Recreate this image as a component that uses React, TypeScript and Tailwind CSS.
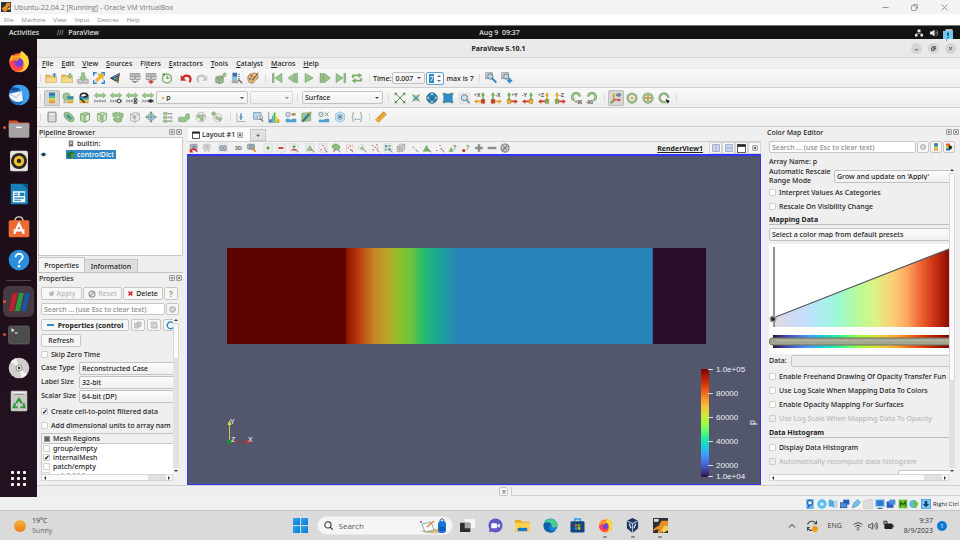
import { cloneElement, type ReactElement, type ReactNode } from 'react';
import { clsx } from 'clsx';

const UBUNTU = "font-['Noto_Sans',sans-serif]";
const SEGOE = "font-['Open_Sans',sans-serif]";

const TURBO = [
  '#30123b', '#4145ab', '#4675ed', '#39a2fc', '#1bcfd4', '#24eca6', '#61fc6c', '#a4fc3b',
  '#d1e834', '#f3c63a', '#fe9b2d', '#f36315', '#d93806', '#b11901', '#7a0402',
];

const PASTEL: [number, string][] = [
  [0, '#dfdae2'], [18, '#c4dcfd'], [28, '#abeff0'], [37, '#9cf7d4'], [48, '#b6fb98'],
  [58, '#daf384'], [68, '#fbcf74'], [76, '#fda860'], [85, '#ea5c2c'], [93, '#c22c10'], [100, '#8a0d03'],
];

const FIELD: [number, string][] = [
  [0, '#8a1400'], [10, '#b63608'], [25, '#c68428'], [36, '#bca428'], [48, '#8cc22a'],
  [58, '#6cc43c'], [68, '#2cbc6c'], [79, '#18aa8c'], [90, '#2098a4'], [100, '#2884b8'],
];

function Svg({ children, className = 'w-3 h-3' }: { children: ReactNode; className?: string }) {
  return (
    <svg viewBox="0 0 16 16" className={clsx('shrink-0', className)} fill="none" aria-hidden="true">
      {children}
    </svg>
  );
}

/* ---------- toolbar icons ---------- */

const G = '#9bc78a';
const GD = '#64985a';
const GR = '#8b8f8c';

const folder = (badge: ReactNode) => (
  <>
    <path d="M1 4h5l1.500 1.500H15V14H1z" fill="#e9c263" stroke="#b98f35" strokeWidth=".8" />
    <path d="M1.500 7.500h13V14h-13z" fill="#f5d98c" />
    {badge}
  </>
);

const server = (badge: ReactNode) => (
  <>
    <path d="M1.500 2h6v8h-6zM8.500 2h6v8h-6z" fill="#d3d5d3" stroke="#8d908d" />
    <path d="M3 4h3M3 6h3M10 4h3M10 6h3" stroke="#747874" />
    <path d="M4.500 10v3h7v-3" stroke="#8d908d" />
    {badge}
  </>
);

const ruler = (badge: ReactNode) => (
  <>
    <path d="M0 4.500L4 1v2h8V1l4 3.500L12 8V6H4v2z" fill={G} stroke={GD} strokeWidth=".5" />
    <path d="M1 14v-4M4.500 14v-3M8 14v-4M11.500 14v-3M15 14v-4M1 12h14" stroke="#7a7a7a" />
    {badge}
  </>
);

const cube = (fill: string, inner?: ReactNode) => (
  <>
    <path d="M2 4l7-2.500 5 2v8L8 15l-6-2.500z" fill={fill} stroke={GD} strokeWidth=".9" />
    <path d="M2 4l6 2 6-2.500M8 6v9" stroke={GD} strokeWidth=".9" />
    {inner}
  </>
);

const dotted = <rect x="1.500" y="1.500" width="13" height="13" stroke="#b0b0b0" strokeDasharray="2 2" />;
const cursor = <path d="M10.500 10l4.500 5" stroke="#6a6a6a" strokeWidth="1.400" />;

const turboSwatch = (x: number, y: number, w: number, h: number) => (
  <>
    <rect x={x} y={y} width={w} height={h} fill="#e59a3c" />
    <rect x={x} y={y} width={w} height={h * 0.75} fill="#d6d04c" />
    <rect x={x} y={y} width={w} height={h * 0.5} fill="#45bda0" />
    <rect x={x} y={y} width={w} height={h * 0.28} fill="#3773c0" />
  </>
);

const fourArrows = (dir: 'out' | 'in') => (
  <>
    <path d="M3 3l10 10M13 3L3 13" stroke="#5b8f4e" strokeWidth="1.300" />
    {dir === 'out' ? (
      <path d="M1 1h4L1 5zM15 1v4l-4-4zM1 15v-4l4 4zM15 15h-4l4-4z" fill="#5b8f4e" />
    ) : (
      <>
        <path d="M7 7V3.500L3.500 7zM9 7h3.500L9 3.500zM7 9H3.500L7 12.500zM9 9v3.500L12.500 9z" fill="#5b8f4e" />
        <circle cx="8" cy="8" r="2" fill="#3292cf" />
      </>
    )}
  </>
);

function axis(label: string, right: boolean, v: string, dot: string, h: string) {
  const x = right ? 12 : 4;
  return (
    <>
      <path d={`M${x} 12V3`} stroke={v} strokeWidth="2" />
      <path d={`M${x - 2.6} 4.500L${x} 0l2.600 4.500z`} fill={v} />
      <path d={right ? 'M12 12.500H4' : 'M4 12.500h8'} stroke={h} strokeWidth="2.200" />
      <path d={right ? 'M4.500 9.500L0 12.500l4.500 3z' : 'M11.500 9.500l4.500 3-4.500 3z'} fill={h} />
      <rect x={x - 2.5} y="10" width="5" height="5" fill={dot} stroke="#7d5a1a" strokeWidth=".5" />
      <text x={right ? 0 : 7} y="7" fontSize="7" fontWeight="700" fill="#5e5e5e">{label}</text>
    </>
  );
}

const rotate = (flip: boolean) => (
  <>
    <path d={flip ? 'M3 6a5 5 0 1 1 7 5' : 'M13 6a5 5 0 1 0-7 5'} stroke={GD} strokeWidth="3.200" />
    <path d={flip ? 'M3 6a5 5 0 1 1 7 5' : 'M13 6a5 5 0 1 0-7 5'} stroke="#a7cb98" strokeWidth="1.800" />
    <text x={flip ? 0 : 6} y="15.500" fontSize="6.500" fontWeight="700" fill="#555">{flip ? '-90' : '+90'}</text>
  </>
);

const ring = (inner: ReactNode) => (
  <>
    <circle cx="8" cy="8" r="5.800" stroke="#7fa070" strokeWidth="3.400" />
    <circle cx="8" cy="8" r="5.800" stroke="#a9c79b" strokeWidth="1.700" />
    {inner}
  </>
);

const magnifier = (
  <>
    <rect x="1" y="1" width="9" height="8" fill="#c9ccd0" stroke="#8c9095" />
    <circle cx="7" cy="6" r="3.500" fill="#b5d7ef" stroke="#6b7780" strokeWidth="1.200" />
  </>
);

const tool = {
  open: folder(<path d="M12.500 1l2.500 3h-1.500v3h-2V4H10z" fill="#2f88c5" />),
  loadState: folder(<path d="M12 9l3-4h-1.700V2h-2.600v3H9z" fill={G} stroke={GD} strokeWidth=".6" />),
  save: (
    <>
      <path d="M1 10h14v5H1z" fill="#c5c8c5" stroke="#8d918d" strokeWidth=".8" />
      <path d="M8 12l4.500-5H10V1H6v6H3.500z" fill={G} stroke={GD} strokeWidth=".7" />
    </>
  ),
  extract: (
    <>
      <path d="M1 5V1h4M11 1h4v4M15 11v4h-4M5 15H1v-4" stroke="#3387c6" strokeWidth="2" />
      <path d="M6 2.500h7.500V10L11 7.500 5.500 13 3 10.500 8.500 5z" fill="#f4b61b" stroke="#c78a0b" strokeWidth=".5" />
    </>
  ),
  catalyst: (
    <>
      <path d="M1 8L14.500 1l-2 14z" fill="#39424b" />
      <path d="M5 7.500l8-4M6 9l6.500-1.500" stroke="#42b2d9" strokeWidth="1.400" />
      <path d="M7.500 10.500l5-.5" stroke="#4fae4b" strokeWidth="1.600" />
      <path d="M9 12.500l3.500.5" stroke="#e0c53c" strokeWidth="1.200" />
      <path d="M11 11l2.500-8" stroke="#d13b2c" strokeWidth="1.200" />
    </>
  ),
  connect: server(<path d="M8 15l3-3H5z" fill={GD} />),
  disconnect: server(<circle cx="8" cy="13" r="2.500" fill="#d63a35" />),
  timer: (
    <>
      <circle cx="8" cy="8.500" r="6" fill="#f0f3ee" stroke="#84b071" strokeWidth="2" />
      <path d="M8 5v4l3-1.500" stroke="#536c4b" strokeWidth="1.200" />
      <path d="M1 3l4-2v4z" fill={GD} />
    </>
  ),
  undo: (
    <>
      <path d="M4 8c2-5 10-4 10 2 0 1.500-.5 2.500-1.500 3.500" stroke="#cf2a27" strokeWidth="3" />
      <path d="M1 4v7.500h7.500z" fill="#cf2a27" />
    </>
  ),
  redo: (
    <>
      <path d="M12 8C10 3 2 4 2 10c0 1.500.5 2.500 1.500 3.500" stroke="#c4c6c4" strokeWidth="3" />
      <path d="M15 4v7.500H7.500z" fill="#c4c6c4" />
    </>
  ),
  findData: (
    <>
      <path d="M1 7l5-2 5 2v7l-5 1.500L1 14z" fill="#9fb896" stroke="#66845b" strokeWidth=".8" />
      <path d="M1 7l5 2 5-2M6 9v6" stroke="#66845b" strokeWidth=".8" />
      <path d="M8 7l4-6 3 1-1 4z" fill={G} stroke={GD} strokeWidth=".6" />
    </>
  ),
  sourceLegend: (
    <>
      <rect x="2" y="1" width="6" height="10" fill="#3b6ea5" />
      <rect x="2" y="6" width="6" height="5" fill="#8dc6de" />
      <path d="M9 3h3M9 6h3M9 9h3" stroke="#777" />
      <rect x="1" y="11" width="9" height="4" fill="#a9a9a9" />
      <path d="M10 10l5 5" stroke="#555" strokeWidth="1.500" />
    </>
  ),
  palette: (
    <>
      <path d="M7 2c4-2 8 1 8 5 0 3-3 2-4 4s-2 4-5 4-5-3-5-7 2-5 6-6z" fill="#e0b676" stroke="#8b6228" strokeWidth=".8" />
      <circle cx="6" cy="5" r="1.400" fill="#c93939" />
      <circle cx="4" cy="9" r="1.400" fill="#3f78bf" />
      <circle cx="11" cy="5" r="1.400" fill="#fff" />
      <path d="M15 1L7 11" stroke="#6b4b2a" strokeWidth="1.400" />
    </>
  ),
  first: <path d="M2 2h2v12H2zM14.500 2v12L5.500 8z" fill={G} stroke={GD} strokeWidth=".8" />,
  prev: <path d="M14 2v12h-2.500V2zM10 2v12L1.500 8z" fill={G} stroke={GD} strokeWidth=".8" />,
  play: <path d="M3 2l10.500 6L3 14z" fill={G} stroke={GD} strokeWidth=".8" />,
  next: <path d="M1.500 2H3v12H1.500zM4.500 2H6v12H4.500zM7.500 2v12L15 8z" fill={G} stroke={GD} strokeWidth=".8" />,
  last: <path d="M12 2h2v12h-2zM1.500 2v12l9-6z" fill={G} stroke={GD} strokeWidth=".8" />,
  loop: (
    <>
      <path d="M2.500 8V4.500H11M13.500 8v3.500H5" stroke="#7cae6c" strokeWidth="2.600" />
      <path d="M10 1l5 3.500L10 8zM6 8l-5 3.500L6 15z" fill="#7cae6c" />
    </>
  ),
  zoomData: (
    <>
      {magnifier}
      <path d="M9 8l6 6" stroke="#3487c2" strokeWidth="2.600" />
    </>
  ),
  zoomAdd: (
    <>
      {magnifier}
      <path d="M11.500 8v7M8 11.500h7" stroke="#3487c2" strokeWidth="2.600" />
    </>
  ),
  colorLegend: turboSwatch(4, 1, 8, 14),
  editColor: (
    <>
      <circle cx="6" cy="6" r="5" fill={G} stroke={GD} strokeWidth=".7" />
      {turboSwatch(7, 6, 8, 9)}
      <path d="M2 11h4v4H2z" fill="#b6b6b6" />
    </>
  ),
  separateColor: (
    <>
      {turboSwatch(2, 6, 12, 9)}
      <path d="M3 6c0-6 10-6 10 0M8 7l5-2-3-3" stroke="#222" strokeWidth="2" />
      <path d="M3 9l6 5" stroke="#222" strokeWidth="1.500" />
    </>
  ),
  rescale: ruler(null),
  rescaleCustom: ruler(<circle cx="12" cy="12" r="2.500" fill="#eee" stroke="#333" strokeWidth="1.300" />),
  rescaleTime: ruler(<path d="M10.500 9h4l-4 6h4z" fill="#eee" stroke="#333" strokeWidth="1.200" />),
  rescaleVisible: ruler(<path d="M8 12c2-3 5-3 7 0-2 3-5 3-7 0z" fill="#333" />),
  resetCamera: fourArrows('out'),
  resetClosest: fourArrows('in'),
  zoomToData: (
    <>
      <circle cx="8" cy="8" r="7" fill="#2f8fce" stroke="#33627f" />
      <path d="M8 1v14M1 8h14M4.500 3c-2 4-2 6 0 10M11.500 3c2 4 2 6 0 10" stroke="#255a7d" />
      <path d="M6 4h4L8 1zM6 12h4l-2 3zM4 6v4L1 8zM12 6v4l3-2z" fill="#c9e5bd" />
    </>
  ),
  zoomClosest: (
    <>
      <path d="M1 1h4L1 5zM15 1v4l-4-4zM1 15v-4l4 4zM15 15h-4l4-4z" fill={GD} />
      <rect x="2.500" y="2.500" width="11" height="11" rx="1" fill="#2f8fce" stroke="#3b7aa5" />
    </>
  ),
  zoomBox: (
    <>
      {dotted}
      <circle cx="8.500" cy="7.500" r="4" fill="#cfe0ec" stroke="#7f9bb0" strokeWidth="1.500" />
      <path d="M11.500 10.500l4 4.500" stroke="#6f8ca3" strokeWidth="2.200" />
    </>
  ),
  posX: axis('+X', true, '#6aa84f', '#d8382b', '#e3a324'),
  negX: axis('-X', false, '#6aa84f', '#d8382b', '#e3a324'),
  posY: axis('+Y', false, '#6aa84f', '#edb92e', '#d8382b'),
  negY: axis('-Y', true, '#6aa84f', '#edb92e', '#d8382b'),
  posZ: axis('+Z', true, '#e3a324', '#7db765', '#d8382b'),
  negZ: axis('-Z', false, '#e3a324', '#7db765', '#d8382b'),
  rotCw: rotate(false),
  rotCcw: rotate(true),
  axes: (
    <>
      <path d="M5 11V4" stroke="#d98a2b" strokeWidth="2" />
      <path d="M3 5l2-4 2 4z" fill="#e3a324" />
      <path d="M11 8.500l4 2-4 2z" fill="#d8382b" />
      <path d="M5 10.500h7" stroke="#d8382b" strokeWidth="1.600" />
      <path d="M1 15l4-4" stroke="#6aa84f" strokeWidth="3" />
      <path d="M8 4c2-2.500 5-2.500 7 0-2 2.500-5 2.500-7 0z" fill="#7e8ea8" stroke="#4b566b" strokeWidth=".7" />
    </>
  ),
  centerAxes: ring(<circle cx="8" cy="8" r="2" fill="#d9a441" />),
  resetCenter: ring(<path d="M8 4v8M4 8h8" stroke="#c99335" strokeWidth="2" />),
  pickCenter: (
    <>
      <path d="M12 12A5.800 5.800 0 1 1 13.800 8" stroke="#8fb080" strokeWidth="3.200" />
      <path d="M10 9l5.500 3-2.500 3.500z" fill="#111" />
    </>
  ),
  calculator: (
    <>
      <rect x="2.500" y="1.500" width="11" height="13" rx="1" fill="#b9bdb9" stroke="#7f837f" />
      <rect x="4" y="3" width="8" height="3" fill="#edf1ed" />
      <path d="M4 8h8M4 10.500h8M4 13h8" stroke="#fff" strokeWidth="1.400" strokeDasharray="2 1" />
    </>
  ),
  contour: (
    <>
      <ellipse cx="8" cy="8" rx="8" ry="4.500" transform="rotate(42 8 8)" fill={G} stroke={GD} />
      <ellipse cx="8" cy="8" rx="4.500" ry="2" transform="rotate(42 8 8)" fill="#4d90aa" />
    </>
  ),
  clip: cube('#b5d7a6', <path d="M8 6l6-2.500v8L8 15z" fill="#e2ecde" stroke={GD} />),
  slice: cube('#d6e6d0', <path d="M5 3l5 3v8l-5-2z" fill="#8fc27e" />),
  threshold: (
    <path d="M1 3l6-1v5l-5 1zM9 2l6 2-1 5-5-2zM2 10l5-1v6l-4-2zM9 9l4 1-1 4-3 1z" fill={G} stroke={GD} strokeWidth=".9" />
  ),
  extractSubset: (
    <>
      <path d="M2 4l7-2.500 5 2v8L8 15l-6-2.500zM2 4l6 2 6-2.500M8 6v9" stroke="#a4a8a4" fill="#e5e5e5" />
      <path d="M5 6l4 1v4l-4-1z" fill="#adb5ad" />
    </>
  ),
  glyph: (
    <>
      <circle cx="8" cy="8" r="4.500" fill="#b7d3d8" stroke="#6e98a5" />
      <path d="M8 0l2 3H6zM8 16l2-3H6zM0 8l3-2v4zM16 8l-3-2v4z" fill={GD} />
      <path d="M8 3v10M3 8h10" stroke="#5b8b95" />
    </>
  ),
  stream: (
    <>
      <path d="M2 2h5v3H2zM2 7h4v3H2zM2 12h5v3H2z" fill={G} stroke="#739866" strokeWidth=".6" />
      <path d="M8 3.500h6M7 8.500h3M8 13.500h6" stroke="#969996" strokeWidth="1.500" />
      <circle cx="12" cy="8.500" r="2" fill="#aeb3ae" />
    </>
  ),
  warp: <path d="M1 14V9c3-2 6 1 9-1l1-4h4v6c-3 1-2 3-5 4s-5 0-9 0z" fill={G} stroke={GD} strokeWidth=".8" />,
  group: (
    <>
      <circle cx="8" cy="8" r="6.500" stroke="#b0b4b0" fill="#eceeec" />
      <circle cx="5.500" cy="7" r="2.200" fill={G} stroke={GD} strokeWidth=".6" />
      <circle cx="10.500" cy="6.500" r="2" fill="#b8bcb8" stroke="#858985" strokeWidth=".6" />
      <circle cx="9" cy="11" r="2" fill={G} stroke={GD} strokeWidth=".6" />
    </>
  ),
  extractGroup: (
    <>
      <circle cx="9" cy="9" r="5.500" stroke="#b0b4b0" fill="#eceeec" />
      <circle cx="3.500" cy="3.500" r="2.500" fill={G} stroke={GD} strokeWidth=".6" />
      <circle cx="8" cy="9" r="2" fill="#b8bcb8" stroke="#858985" strokeWidth=".6" />
      <circle cx="12" cy="11" r="2" fill={G} stroke={GD} strokeWidth=".6" />
    </>
  ),
  probe: (
    <>
      <path d="M2.500 2v12H14" stroke="#8fa6b5" />
      <path d="M8 3v9" stroke="#2f78b0" strokeWidth="1.500" />
      <circle cx="8" cy="8" r="2" fill="#56a0d6" />
    </>
  ),
  extractSel: (
    <>
      <path d="M2 2h10v9H2z" fill="#b9d7ea" stroke="#6e9ab8" />
      <path d="M7 7h7v4H7z" fill="#f0f3f5" stroke="#909090" />
      <path d="M10 9l5 5" stroke="#777" strokeWidth="1.500" />
    </>
  ),
  histogram: (
    <>
      <path d="M1 1v14h14" stroke="#777" />
      <path d="M2 11h3v4H2z" fill="#3b6ad1" />
      <path d="M5 6h2.500v9H5z" fill="#3fb7d8" />
      <path d="M7.500 2H10v13H7.500z" fill="#58b844" />
      <path d="M10 7h2.500v8H10z" fill="#f1d030" />
      <path d="M12.500 11H15v4h-2.500z" fill="#ec8b29" />
    </>
  ),
  overTime: (
    <>
      <circle cx="4" cy="4.500" r="3" fill="#d3dbe0" stroke="#7c8a94" />
      <path d="M9 3h5v3H9z" fill="#a97a3b" />
      <path d="M1 11c3-3 5 2 8 0s4-1 6 0v4H1z" fill="#4d9fd3" />
    </>
  ),
  overLine: (
    <>
      <path d="M1 3l12-1v11L1 14z" fill={G} stroke={GD} strokeWidth=".7" />
      <path d="M2 14L12 3" stroke="#2f6f9e" strokeWidth="2.500" />
      <path d="M11 4l3-3" stroke="#e3a324" strokeWidth="2" />
    </>
  ),
  globalTime: (
    <>
      <circle cx="4" cy="4.500" r="3" fill="#d3dbe0" stroke="#7c8a94" />
      <path d="M9 2l5 5M14 2L9 7" stroke={GD} strokeWidth="1.300" />
      <path d="M1 12c3-2 5 1 8-1s4-1 6 0v4H1z" fill="#4d9fd3" />
    </>
  ),
  freeze: (
    <>
      <path d="M2 4l6-3 6 3v8l-6 3-6-3z" fill="#c6dff0" stroke="#98bdd5" />
      <path d="M8 4v8M4.500 6l7 4M11.500 6l-7 4" stroke="#557f9b" strokeWidth="1.200" />
    </>
  ),
  braces: (
    <>
      <path d="M4 2c-2 0-1.500 2-1.500 4S1 8 1 8s1.500 0 1.500 2S2 14 4 14M12 2c2 0 1.500 2 1.500 4S15 8 15 8s-1.500 0-1.500 2 .5 4-1.500 4" stroke="#8a8a8a" strokeWidth="1.200" />
      <path d="M5 11h1.500M7.500 11H9M10 11h1.500" stroke="#3c87bd" strokeWidth="1.600" />
    </>
  ),
  measure: (
    <>
      <path d="M1 11.500L11.500 1 15 4.500 4.500 15z" fill="#efb23a" stroke="#b67b13" />
      <path d="M5 8l1.500 1.500M7.500 5.500L9 7M10 3l1.500 1.500" stroke="#8d5c08" />
    </>
  ),
  // render view strip
  camUndo: (
    <>
      <rect x="2" y="2" width="11" height="8" rx="1" fill="#b9bcc0" stroke="#75797e" />
      <circle cx="8" cy="6" r="2.500" fill="#6a8aa8" />
      <path d="M3 13c2-5 8-4 10 1" stroke="#cf2a27" strokeWidth="2.600" />
      <path d="M1 9v6h6z" fill="#cf2a27" />
    </>
  ),
  camRedo: (
    <>
      <rect x="2" y="2" width="11" height="8" rx="1" fill="#d4d4d4" stroke="#b5b5b5" />
      <circle cx="8" cy="6" r="2.500" fill="#bcbcbc" />
      <path d="M4 14c2-5 6-4 8 0" stroke="#c4c4c4" strokeWidth="2.400" />
    </>
  ),
  capture: (
    <>
      {dotted}
      <rect x="3" y="4.500" width="10" height="7.500" rx="1" fill="#a9b0b5" stroke="#6e757a" />
      <circle cx="8" cy="8" r="2.300" fill="#5d87a8" stroke="#eee" strokeWidth=".8" />
    </>
  ),
  threeD: <text x="1" y="11" fontSize="9" fontWeight="700" fill="#6d7269">3D</text>,
  adjustCam: (
    <>
      <rect x="1" y="2" width="11" height="8" rx="1" fill="#b4b9bd" stroke="#777c80" />
      <circle cx="7" cy="6" r="2.800" fill="#8fc0e0" stroke="#556" strokeWidth=".8" />
      <path d="M8 8l6 6" stroke="#dd8e27" strokeWidth="2.600" />
    </>
  ),
  selAdd: <>{dotted}<path d="M8 5v6M5 8h6" stroke="#6fa660" strokeWidth="2.600" /></>,
  selRemove: <>{dotted}<path d="M4 8h8" stroke="#cf2a27" strokeWidth="2.800" /></>,
  selToggle: <>{dotted}<path d="M4 11h8" stroke="#c8402f" strokeWidth="2.200" /><path d="M5 6h6M8 3v6" stroke={GD} strokeWidth="1.800" />{cursor}</>,
  surfCells: <>{dotted}<path d="M3 12l5-8 4 8z" fill={G} stroke={GD} strokeWidth=".8" />{cursor}</>,
  surfPoints: <>{dotted}<path d="M4 11h2M7 4h2M10 8h2" stroke="#c8402f" strokeWidth="1.800" />{cursor}</>,
  frustumCells: <><path d="M2 4c3-4 11-3 12 2s-4 5-6 5-8-3-6-7z" fill="#8bc077" stroke={GD} strokeWidth=".8" /><path d="M4 14l3-4" stroke="#5c4b3b" strokeWidth="1.500" />{cursor}</>,
  frustumPoints: <><path d="M4 14V3h10v9" stroke="#d9a29b" strokeDasharray="2 2" strokeWidth="1.400" /><path d="M6 8h2M9 5h2M10 11h2" stroke="#c8402f" strokeWidth="1.500" />{cursor}</>,
  polyCells: <><path d="M2 10V5l5-3 6 3" stroke="#b0b0b0" strokeDasharray="2 2" /><path d="M8 5v7M4.500 8.500h7" stroke={G} strokeWidth="2.600" />{cursor}</>,
  polyPoints: <><path d="M3 4h2M7 7h2M4 11h2M10 3h2M11 8h2" stroke="#b05a50" strokeWidth="1.800" />{cursor}</>,
  blocks: <>{dotted}<path d="M3 3h4v4H3zM8 8h4v4H8z" fill="#5f98ba" /><path d="M9 3h3v3H9zM3 9h3v3H3z" fill={GD} />{cursor}</>,
  grayCube: <path d="M2 6l4-4h8v8l-4 4H2zM2 6h8v8M10 6l4-4M6 6v8M2 10h8" fill="#d8dad8" stroke="#8f928f" />,
  point: <><circle cx="7" cy="7" r="1.500" fill="#aaa" />{cursor}</>,
  tri: <><path d="M2 13l5.500-9 4.500 9z" fill="#7ab469" stroke={GD} strokeWidth=".8" />{cursor}</>,
  hoverPts: <><path d="M2 12h2M7 4h2M9 9h2" stroke="#c05e53" strokeWidth="1.800" />{cursor}</>,
  hoverCell: <><path d="M1 14l4-8 4 8z" fill="#7ab469" /><text x="8" y="11" fontSize="11" fontWeight="700" fill="#7a9a70">?</text></>,
  hoverPoint: <><circle cx="4.500" cy="12" r="2.500" fill="#b03227" /><text x="8" y="11" fontSize="11" fontWeight="700" fill="#7a9a70">?</text></>,
  grow: <path d="M8 2v12M2 8h12" stroke={GR} strokeWidth="4" />,
  shrink: <path d="M1 8h14" stroke={GR} strokeWidth="4" />,
  clear: (
    <>
      <circle cx="8" cy="8" r="6.500" fill="#d0d0d0" stroke="#7d7d7d" strokeWidth="1.800" />
      <path d="M4 12l8-8M5 5l6 6" stroke="#7d7d7d" strokeWidth="1.800" />
    </>
  ),
  gear: (
    <>
      <circle cx="8" cy="8" r="5" fill="#c9c9c9" stroke="#b0b0b0" strokeWidth="2.400" strokeDasharray="2.500 1.400" />
      <circle cx="8" cy="8" r="2" fill="#eee" />
    </>
  ),
  presets: (
    <>
      <path d="M2 1h8v5H2z" fill="#e1542e" />
      <path d="M2 5h8v4H2z" fill="#f2c530" />
      <path d="M2 9h8v3H2z" fill="#49b86c" />
      <path d="M2 12h8v3H2z" fill="#3a6fc4" />
      <path d="M7 5h4l4 3-3 5H8z" fill="#222" />
    </>
  ),
} satisfies Record<string, ReactElement>;

type ToolName = keyof typeof tool;

function ToolButton({ name, active, small }: { name: ToolName; active?: boolean; small?: boolean }) {
  return (
    <button
      type="button"
      aria-label={name}
      className={clsx(
        'flex shrink-0 items-center justify-center',
        small ? 'h-3 w-[13px]' : 'h-4 w-4 rounded-xs',
        active && 'border border-[#bcbcbc] bg-[#d6d6d6]',
      )}
    >
      <Svg className={small ? 'h-[10px] w-[10px]' : 'h-3 w-3'}>{cloneElement(tool[name])}</Svg>
    </button>
  );
}

function ToolGroup({ names, className }: { names: ToolName[]; className?: string }) {
  return (
    <div className={clsx('flex shrink-0 items-center', className)}>
      {names.map((n) => <ToolButton key={n} name={n} />)}
    </div>
  );
}

function Grip({ className }: { className?: string }) {
  return <span className={clsx('h-2 w-px shrink-0 bg-[#dadada]', className)} />;
}

/* ---------- form parts ---------- */

function Combo({ value, label, className, arrow = true }: { value: string; label: string; className?: string; arrow?: boolean }) {
  return (
    <div className={clsx('relative flex min-w-0 items-center', className)}>
      <select
        aria-label={label}
        className="h-full w-full appearance-none rounded-xs border border-[#c2c2c2] bg-gradient-to-b from-[#fbfbfb] to-[#f0f0f0] px-[2px] leading-none"
      >
        <option>{value}</option>
      </select>
      {arrow && <span className="pointer-events-none absolute right-[4px] border-x-2 border-t-2 border-x-transparent border-t-[#444]" />}
    </div>
  );
}

function Check({ label, checked, disabled, className }: { label: string; checked?: boolean; disabled?: boolean; className?: string }) {
  return (
    <label className={clsx('flex shrink-0 items-center gap-[3px] whitespace-nowrap', disabled && 'text-[#b9b9b9]', className)}>
      <input
        type="checkbox"
        defaultChecked={checked}
        disabled={disabled}
        className="flex h-[7px] w-[7px] shrink-0 appearance-none items-center justify-center rounded-[1px] border border-[#cdcdcd] bg-white text-[7px] leading-none font-bold text-black checked:before:content-['✓'] disabled:bg-[#ededed]"
      />
      {label}
    </label>
  );
}

function PanelHeader({ title }: { title: string }) {
  return (
    <div className="flex h-[10px] shrink-0 items-center gap-[1px] pr-[1px] pl-[2px]">
      <h2 className="mr-auto">{title}</h2>
      {['Float', 'Close'].map((n) => (
        <button key={n} type="button" aria-label={`${n} ${title}`} className="flex h-[6px] w-[6px] items-center justify-center rounded-[1px] border border-[#a0a0a0]">
          <Svg className="h-1 w-1"><path d={n === 'Float' ? 'M3 8l5-5 5 5-5 5z' : 'M2 2l12 12M14 2L2 14'} stroke="#555" strokeWidth="3" /></Svg>
        </button>
      ))}
    </div>
  );
}

const SMALL_BTN = 'flex shrink-0 items-center justify-center rounded-xs border border-[#c6c6c6] bg-[#f7f7f7]';
const SEARCH = 'min-w-0 flex-1 rounded-xs border border-[#c6c6c6] bg-white px-[2px] leading-none placeholder:text-[#8c8c8c]';

function VScroll({ thumb }: { thumb: string }) {
  return (
    <div className="flex w-[6px] shrink-0 flex-col items-center bg-[#e2e2e2]">
      <span className="flex h-[6px] w-full items-center justify-center bg-[#f2f2f2]"><i className="border-x-2 border-b-2 border-x-transparent border-b-[#333]" /></span>
      <span className={clsx('w-full border border-[#d8d8d8] bg-[#fbfbfb]', thumb)} />
      <span className="mt-auto flex h-[6px] w-full items-center justify-center bg-[#f2f2f2]"><i className="border-x-2 border-t-2 border-x-transparent border-t-[#333]" /></span>
    </div>
  );
}

function HScroll() {
  return (
    <div className="flex h-[7px] shrink-0 items-center border border-[#d6d6d6] bg-[#fbfbfb]">
      <span className="flex h-full w-[6px] items-center justify-center"><i className="border-y-2 border-r-2 border-y-transparent border-r-[#333]" /></span>
      <span className="ml-auto h-full w-[18px] bg-[#e0e0e0]" />
      <span className="flex h-full w-[6px] items-center justify-center"><i className="border-y-2 border-l-2 border-y-transparent border-l-[#333]" /></span>
    </div>
  );
}

/* ---------- Ubuntu dock ---------- */

const firefox = (
  <>
    <circle cx="8" cy="8.500" r="7" fill="#ff5a36" />
    <path d="M1 8c0-3 1-4 2-5.500L4 4c2-1 3-1 4-1 1-1 1-2 1.500-3 2 1 3 3 3.500 4l1-1c2 4 1 8-1 10z" fill="#ffb02e" />
    <path d="M10 0c3 2 6 6 5 10-1 4-5 6-8 5 5 0 6-5 4-8-2-2-2-4-1-7z" fill="#ffd83b" />
    <path d="M1.200 8c2-2 4-2 5-1 2-1 5 0 5 3s-3 4-5 3.500S1 11 1.200 8z" fill="#ff3f56" />
    <circle cx="8" cy="8.500" r="3.200" fill="#7542d5" />
    <path d="M3 5c2-1 4 0 5 1L6 7.500z" fill="#ff8a1f" />
  </>
);

const dockTop: [string, ReactNode, boolean?][] = [
  ['Firefox', firefox],
  ['Thunderbird', (
    <>
      <circle cx="8" cy="8" r="7.500" fill="#1f6fc4" />
      <path d="M3 2c5-3 12-1 12.500 5S12 15 8 15.500C14 12 12 5 3 2z" fill="#3aa0ef" />
      <path d="M1 7l9-2 1 7c-3 2-8 1-10-3z" fill="#f2f5fa" />
      <path d="M1 7l5 3 4-5" stroke="#9fb2c9" strokeWidth=".6" />
      <path d="M1 4c3-2 6-2 8 0L5 5z" fill="#154f98" />
    </>
  )],
  ['Files', (
    <>
      <path d="M.5 2.500h6l1.500 1.500h7.500V8H.5z" fill="#d4532f" />
      <rect x=".5" y="4.500" width="15" height="10.500" rx="1" fill="#a5a3a3" />
      <path d="M6 7.500h4" stroke="#fff" strokeWidth="1" />
    </>
  ), true],
  ['Rhythmbox', (
    <>
      <rect x="1.500" y=".5" width="13" height="15" rx="1.500" fill="#e4e2da" />
      <circle cx="8" cy="8" r="5.800" fill="#262626" />
      <circle cx="8" cy="8" r="3.800" fill="#f2c12f" />
      <circle cx="8" cy="8" r="1.600" fill="#262626" />
    </>
  )],
  ['LibreOffice Writer', (
    <>
      <path d="M2 .5h8.500L14.500 4v11.500H2z" fill="#1580b9" />
      <path d="M10.500.5h4V4z" fill="#0a5682" />
      <path d="M3.500 6h9v8h-9z" fill="#fff" />
      <path d="M4.500 7.500h3M4.500 9h3M4.500 11h7M4.500 12.500h5" stroke="#1580b9" strokeWidth=".8" />
      <path d="M8.500 7h3.500v2.500H8.500z" fill="#1580b9" />
    </>
  )],
  ['Ubuntu Software', (
    <>
      <path d="M5 4c0-4.500 6-4.500 6 0" stroke="#d8cdb8" strokeWidth="1" />
      <rect x=".5" y="3" width="15" height="12.500" rx="1.200" fill="#ef6a32" />
      <path d="M4.500 13L8 5.500l3.500 7.500M4 10.500h8" stroke="#fff" strokeWidth="1.600" />
    </>
  )],
  ['Help', (
    <>
      <circle cx="8" cy="8" r="7.500" fill="#2a8fdd" />
      <path d="M5.500 6c0-3.500 5.500-3.300 5.200 0C10.500 8 8 8 8 10.300" stroke="#fff" strokeWidth="1.300" />
      <circle cx="8" cy="12.500" r=".9" fill="#fff" />
    </>
  )],
];

const dockBottom: [string, ReactNode, boolean?][] = [
  ['ParaView', (
    <>
      <path d="M3.500 1.500H7L4 14.500H.5z" fill="#c3202f" />
      <path d="M8 1.500h3.500L8.500 14.500H5z" fill="#2a9a3f" />
      <path d="M12.500 1.500H16L13 14.500H9.500z" fill="#1b56a6" />
    </>
  ), true],
  ['Terminal', (
    <>
      <rect x=".5" y="1.500" width="15" height="13" rx="1" fill="#4c4c4c" stroke="#6a6a6a" strokeWidth=".5" />
      <path d="M2.500 3.500L4 4.500 2.500 5.500M5 6.500h2" stroke="#fff" strokeWidth=".8" />
    </>
  ), true],
  ['Disc', (
    <>
      <circle cx="8" cy="8" r="7.500" fill="#cfcfcb" />
      <path d="M8 8L2 3.500A7.500 7.500 0 0 1 6 .8zM8 8l6 4.500a7.500 7.500 0 0 1-4 2.700z" fill="#f2f2ef" />
      <circle cx="8" cy="8" r="2.200" fill="#eee" stroke="#8e8e8a" strokeWidth=".7" />
      <circle cx="8" cy="8" r=".9" fill="#333" />
    </>
  )],
  ['Trash', (
    <>
      <rect x="2" y=".5" width="12" height="15" rx="1" fill="#c9c9c5" />
      <path d="M3.500 1.500h9v1.500h-9z" fill="#f2f2ef" />
      <path d="M4 3h8" stroke="#6c6c69" strokeWidth=".6" />
      <path d="M6 9.500l2-3 2 3M11.200 9.500L12 12.500H9M7 12.500H4.200L5.200 9.500" stroke="#2f9a3c" strokeWidth="1.500" />
    </>
  )],
];

function DockItem({ name, icon, running, active }: { name: string; icon: ReactNode; running?: boolean; active?: boolean }) {
  return (
    <li className="relative flex h-[33px] items-center justify-center">
      {running && <span className="absolute left-[3px] z-10 h-[3px] w-[3px] rounded-full bg-[#e2532a]" />}
      <button type="button" aria-label={name} className={clsx('flex h-[31px] w-[31px] items-center justify-center rounded-md', active && 'bg-[#463a44]')}>
        <Svg className="h-[22px] w-[22px]">{icon}</Svg>
      </button>
    </li>
  );
}

function Dock() {
  return (
    <nav className="flex w-[37px] shrink-0 flex-col bg-gradient-to-b from-[#180c16] to-[#241220] pt-[6px]">
      <ul>{dockTop.map(([name, icon, running]) => <DockItem key={name} name={name} icon={icon} running={running} />)}</ul>
      <hr className="mx-[6px] my-[4px] border-[#4b3f49]" />
      <ul>{dockBottom.map(([name, icon, running], i) => <DockItem key={name} name={name} icon={icon} running={running} active={i === 0} />)}</ul>
      <button type="button" aria-label="Show applications" className="mx-auto mt-auto mb-[11px] grid grid-cols-3 gap-[3px]">
        {Array.from({ length: 9 }, (_, i) => <span key={i} className="h-[3px] w-[3px] rounded-[1px] bg-white" />)}
      </button>
    </nav>
  );
}

/* ---------- toolbars ---------- */

const MENUS: [string, string, string][] = [
  ['', 'F', 'ile'], ['', 'E', 'dit'], ['', 'V', 'iew'], ['', 'S', 'ources'], ['Fi', 'l', 'ters'],
  ['', 'E', 'xtractors'], ['', 'T', 'ools'], ['', 'C', 'atalyst'], ['', 'M', 'acros'], ['', 'H', 'elp'],
];

const BAR = 'flex shrink-0 items-center border-b border-[#cfcfcf] bg-gradient-to-b from-[#f9f9f9] to-[#ededed] pl-[3px]';

function Toolbars() {
  return (
    <>
      <div className={clsx(BAR, 'h-[19px]')}>
        <Grip className="mr-[2px]" />
        <ToolGroup names={['open', 'loadState', 'save', 'extract', 'catalyst']} />
        <ToolGroup className="ml-[4px]" names={['connect', 'disconnect', 'timer']} />
        <ToolGroup className="ml-[3px]" names={['undo', 'redo']} />
        <ToolGroup className="ml-[3px]" names={['findData', 'sourceLegend', 'palette']} />
        <Grip className="mr-[3px] ml-[4px]" />
        <ToolGroup names={['first', 'prev', 'play', 'next', 'last', 'loop']} />
        <Grip className="mr-[3px] ml-[4px]" />
        <span className="mr-[1px]">Time:</span>
        <Combo label="Time value" value="0.007" className="h-[12px] w-[33px]" />
        <div className="ml-[1px] flex h-[13px] w-[18px] items-center rounded-xs border border-[#5da0d0] bg-white">
          <input aria-label="Time step" defaultValue="7" className="ml-[2px] h-[9px] w-[5px] bg-[#2f84c0] text-center leading-none text-white" />
          <span className="ml-auto mr-[2px] flex flex-col gap-[3px]">
            <i className="border-x-2 border-b-2 border-x-transparent border-b-[#666]" />
            <i className="border-x-2 border-t-2 border-x-transparent border-t-[#666]" />
          </span>
        </div>
        <span className="ml-[2px]">max is 7</span>
        <Grip className="mr-[3px] ml-[5px]" />
        <ToolGroup names={['zoomData', 'zoomAdd']} />
      </div>

      <div className={clsx(BAR, 'h-[20px]')}>
        <Grip className="mr-[3px]" />
        <ToolButton name="colorLegend" active />
        <ToolGroup names={['editColor', 'separateColor', 'rescale', 'rescaleCustom', 'rescaleTime', 'rescaleVisible']} />
        <div className="relative flex h-[13px] w-[92px] items-center">
          <Combo label="Coloring" value="&nbsp;&nbsp;&nbsp;&nbsp;p" className="h-full w-full" />
          <span className="pointer-events-none absolute left-[6px] h-[2px] w-[2px] rounded-full bg-[#d79a2b]" />
        </div>
        <Combo label="Component" value="" className="ml-[2px] h-[13px] w-[43px] opacity-60" />
        <Grip className="mr-[4px] ml-[4px]" />
        <Combo label="Representation" value="Surface" className="h-[13px] w-[81px]" />
        <Grip className="mr-[3px] ml-[5px]" />
        <ToolGroup
          names={['resetCamera', 'resetClosest', 'zoomToData', 'zoomClosest', 'zoomBox', 'posX', 'negX', 'posY', 'negY', 'posZ', 'negZ', 'rotCw', 'rotCcw']}
        />
        <Grip className="mr-[3px] ml-[4px]" />
        <ToolButton name="axes" active />
        <ToolGroup names={['centerAxes', 'resetCenter', 'pickCenter']} />
        <Grip className="ml-[4px]" />
      </div>

      <div className={clsx(BAR, 'h-[19px]')}>
        <Grip className="mr-[3px]" />
        <ToolGroup
          className="w-[181px] justify-between"
          names={['calculator', 'contour', 'clip', 'slice', 'threshold', 'extractSubset', 'glyph', 'stream', 'warp', 'group', 'extractGroup']}
        />
        <Grip className="mr-[2px] ml-[5px]" />
        <ToolGroup
          className="w-[132px] justify-between"
          names={['probe', 'extractSel', 'histogram', 'overTime', 'overLine', 'globalTime', 'freeze', 'braces']}
        />
        <Grip className="mr-[3px] ml-[4px]" />
        <ToolButton name="measure" />
      </div>
    </>
  );
}

/* ---------- left column ---------- */

const SELECTS: [string, string][] = [['Case Type', 'Reconstructed Case'], ['Label Size', '32-bit'], ['Scalar Size', '64-bit (DP)']];

function LeftColumn() {
  return (
    <aside className="flex w-[150px] shrink-0 flex-col pr-[4px] pb-[4px]">
      <PanelHeader title="Pipeline Browser" />
      <div className="ml-[1px] h-[119px] shrink-0 border border-[#c9c9c9] bg-white">
        <div className="flex h-[11px] items-center gap-[3px] pl-[29px]">
          <Svg className="h-[9px] w-[6px]"><rect x="2" y="0" width="12" height="16" fill="#777" /><path d="M5 4h6M5 8h6" stroke="#eee" strokeWidth="2" /></Svg>
          builtin:
        </div>
        <div className="flex h-[11px] items-center pl-[1px]">
          <Svg className="h-[7px] w-[7px]"><path d="M0 8c4-6 12-6 16 0-4 6-12 6-16 0z" fill="#a8c4d8" /><circle cx="8" cy="8" r="4" fill="#17384f" /></Svg>
          <span className="ml-[19px] flex h-[9px] items-center gap-[2px] bg-[#2f87c3] pr-[2px] pl-[1px] text-white">
            <Svg className="h-[8px] w-[8px]"><path d="M1 3l9-2 5 2v9l-7 3-7-2z" fill="#23713a" /><path d="M8 6l7-3v9l-7 3z" fill="#3d9a55" /></Svg>
            controlDict
          </span>
        </div>
      </div>

      <div role="tablist" className="mt-[2px] ml-[1px] flex h-[15px] shrink-0 items-end border-b border-[#c4c4c4]">
        <button type="button" role="tab" className="h-[15px] w-[47px] border border-b-0 border-[#c4c4c4] bg-[#f5f5f5]">Properties</button>
        <button type="button" role="tab" className="h-[13px] w-[53px] border border-b-0 border-l-0 border-[#c4c4c4] bg-[#dedede]">Information</button>
      </div>
      <PanelHeader title="Properties" />

      <div className="mx-[4px] mt-[4px] flex h-[13px] shrink-0 gap-[1px]">
        <button type="button" disabled className={clsx(SMALL_BTN, 'w-[41px] gap-[2px] text-[#b9b9b9]')}>
          <Svg className="h-[7px] w-[7px]"><path d="M2 6l9-4 3 3-2 8-8 1z" fill="#bdbdbd" /></Svg>Apply
        </button>
        <button type="button" disabled className={clsx(SMALL_BTN, 'w-[39px] gap-[2px] text-[#b9b9b9]')}>
          <Svg className="h-[8px] w-[8px]"><circle cx="8" cy="8" r="6" stroke="#9a9a9a" strokeWidth="2.500" /><path d="M4 12l8-8" stroke="#9a9a9a" strokeWidth="2.500" /></Svg>Reset
        </button>
        <button type="button" className={clsx(SMALL_BTN, 'w-[40px] gap-[3px]')}>
          <Svg className="h-[5px] w-[5px]"><path d="M2 2l12 12M14 2L2 14" stroke="#c92a2a" strokeWidth="5" /></Svg>Delete
        </button>
        <button type="button" className={clsx(SMALL_BTN, 'w-[14px] text-[8px] font-bold text-[#7aa56b]')}>?</button>
      </div>
      <div className="mx-[4px] mt-[3px] flex h-[12px] shrink-0 gap-[1px]">
        <input type="search" aria-label="Search properties" placeholder="Search ... (use Esc to clear text)" className={SEARCH} />
        <button type="button" aria-label="Advanced properties" className={clsx(SMALL_BTN, 'w-[13px]')}><Svg className="h-[9px] w-[9px]">{tool.gear}</Svg></button>
      </div>

      <div className="mx-[4px] mt-[2px] flex min-h-0 flex-1">
        <div className="flex min-w-0 flex-1 flex-col overflow-hidden pt-[2px]">
          <div className="flex h-[12px] shrink-0 gap-[2px]">
            <button type="button" className={clsx(SMALL_BTN, 'w-[88px] gap-[4px] font-bold whitespace-nowrap')}>
              <span className="h-[2px] w-[7px] shrink-0 bg-[#2f87c3]" />Properties (control
            </button>
            <button type="button" aria-label="Copy" disabled className={clsx(SMALL_BTN, 'w-[14px]')}>
              <Svg className="h-[8px] w-[8px]"><path d="M1 5h8v9H1zM6 2h8v9H6z" fill="#d8d8d8" stroke="#a9a9a9" strokeWidth="1.500" /></Svg>
            </button>
            <button type="button" aria-label="Paste" disabled className={clsx(SMALL_BTN, 'w-[14px]')}>
              <Svg className="h-[8px] w-[8px]"><path d="M2 2h11v12H2zM6 5h8v9H6z" fill="#dcdcdc" stroke="#b5b5b5" strokeWidth="1.500" /></Svg>
            </button>
            <button type="button" aria-label="Restore defaults" className={clsx(SMALL_BTN, 'w-[14px]')}>
              <Svg className="h-[9px] w-[9px]"><path d="M12 3a6 6 0 1 0 2 6" stroke="#2f87c3" strokeWidth="2.500" /></Svg>
            </button>
          </div>
          <button type="button" className={clsx(SMALL_BTN, 'mt-[3px] h-[13px] w-[40px]')}>Refresh</button>
          <Check label="Skip Zero Time" className="mt-[1px] h-[13px]" />
          {SELECTS.map(([label, value]) => (
            <div key={label} className="mt-[1px] flex h-[13px] shrink-0 gap-[1px]">
              <span className="w-[37px] shrink-0 leading-[11px] whitespace-nowrap">{label}</span>
              <Combo label={label} value={value} arrow={false} className="-mr-[4px] flex-1" />
            </div>
          ))}
          <Check label="Create cell-to-point filtered data" checked className="mt-[2px] h-[13px]" />
          <Check label="Add dimensional units to array nam" className="h-[14px]" />
          <div className="mt-[1px] -mr-[4px] flex flex-1 flex-col border border-[#c6c6c6] bg-white">
            <div className="flex h-[10px] shrink-0 items-center gap-[3px] border-b border-[#c6c6c6] bg-[#f0f0f0] pl-[2px]">
              <span className="h-[6px] w-[6px] border border-[#999] bg-[#666]" />Mesh Regions
            </div>
            {['group/empty', 'internalMesh', 'patch/empty', 'patch/sides'].map((r) => (
              <Check key={r} label={r} checked={r === 'internalMesh'} className="h-[9px] pl-[1px]" />
            ))}
          </div>
        </div>
        <VScroll thumb="h-[36px]" />
      </div>
      <div className="mr-[10px] ml-[4px]"><HScroll /></div>
    </aside>
  );
}

/* ---------- render view ---------- */

const VIEW_GROUPS: ToolName[][] = [
  ['camUndo', 'camRedo'],
  ['capture'],
  ['threeD', 'adjustCam'],
  ['selAdd', 'selRemove', 'selToggle'],
  ['surfCells', 'surfPoints', 'frustumCells', 'frustumPoints', 'polyCells', 'polyPoints', 'blocks', 'grayCube', 'point', 'tri', 'hoverPts', 'hoverCell', 'hoverPoint', 'grow', 'shrink', 'clear'],
];

const TICKS: [number, string][] = [[213, '1.0e+05'], [237, '80000'], [261, '60000'], [285, '40000'], [309, '20000'], [320, '1.0e+04']];

function Scene() {
  return (
    <svg viewBox="0 0 570 327" className="block h-full w-full" role="img" aria-label="Pressure field" fontFamily="'Liberation Sans', sans-serif">
      <defs>
        <linearGradient id="field">{FIELD.map(([o, c]) => <stop key={o} offset={`${o}%`} stopColor={c} />)}</linearGradient>
        <linearGradient id="legend" x1="0" y1="1" x2="0" y2="0">
          {TURBO.map((c, i) => <stop key={c} offset={i / (TURBO.length - 1)} stopColor={c} />)}
        </linearGradient>
      </defs>
      <rect x="38" y="92" width="120" height="96" fill="#5c0300" />
      <rect x="157" y="92" width="112" height="96" fill="url(#field)" />
      <rect x="269" y="92" width="195" height="96" fill="#2884b8" />
      <rect x="463" y="92" width="1" height="96" fill="#2c5fb4" />
      <rect x="464" y="92" width="53" height="96" fill="#280e2a" />
      <rect x="512" y="213" width="8" height="108" fill="url(#legend)" />
      {TICKS.map(([y, label]) => (
        <g key={label}>
          <path d={`M519 ${y + 0.5}h5`} stroke="#dcdde3" />
          <text x="527" y={y + 3} fontSize="8" fill="#eceef2">{label}</text>
        </g>
      ))}
      <text transform="translate(566 269) rotate(-90)" fontSize="9" fill="#eceef2">p</text>
      <path d="M40.500 285v-17" stroke="#c9cf3e" />
      <path d="M38.500 269l2-5 2 5z" fill="#d9df4c" />
      <path d="M41 286h17" stroke="#a3283a" />
      <path d="M57 284l5 2-5 2z" fill="#d92a2a" />
      <path d="M38 284h5v4h-5z" fill="#1e8b3a" />
      <g fontSize="7" fill="#fff">
        <text x="41" y="268">Y</text>
        <text x="42" y="286">Z</text>
        <text x="59" y="286">X</text>
      </g>
    </svg>
  );
}

const VIEW_BTN = 'flex h-[12px] w-[13px] items-center justify-center border border-[#d4d4d4] bg-[#f8f8f8]';
const closeBox = (
  <>
    <rect x="1" y="1" width="14" height="14" rx="3" fill="#ddd" stroke="#8a8a8a" strokeWidth="2" />
    <path d="M5 5l6 6M11 5l-6 6" stroke="#444" strokeWidth="2" />
  </>
);

function RenderView() {
  return (
    <main className="flex min-w-0 flex-1 flex-col pr-[1px]">
      <div role="tablist" className="flex h-[14px] shrink-0 items-end pl-[1px]">
        <button type="button" role="tab" className="flex h-[13px] w-[62px] items-center gap-[2px] bg-[#fbfbfb] pl-[4px] whitespace-nowrap">
          <Svg className="h-[8px] w-[8px]"><rect x="1" y="2" width="14" height="13" fill="#fff" stroke="#222" strokeWidth="1.500" /><path d="M1 3.500h14" stroke="#222" strokeWidth="3.500" /></Svg>
          Layout #1
          <Svg className="h-[6px] w-[6px]">{closeBox}</Svg>
        </button>
        <button type="button" role="tab" aria-label="New layout" className="flex h-[12px] w-[16px] items-center justify-center border border-[#c6c6c6] bg-[#e2e2e2]">+</button>
      </div>
      <div className="flex h-[13px] shrink-0 items-center border-t border-[#cfcfcf] bg-[#f1f1f1]">
        {VIEW_GROUPS.map((g) => (
          <div key={g[0]} className="mr-[3px] flex shrink-0">
            {g.map((n) => <ToolButton key={n} name={n} small />)}
          </div>
        ))}
        <span className="mr-[6px] ml-auto font-bold underline">RenderView1</span>
        <button type="button" aria-label="Split horizontal" className={VIEW_BTN}><Svg className="h-[8px] w-[8px]"><path d="M1 1h14v14H1zM8 1v14" fill="#ccd6ee" stroke="#93a1c4" strokeWidth="1.500" /></Svg></button>
        <button type="button" aria-label="Split vertical" className={VIEW_BTN}><Svg className="h-[8px] w-[8px]"><path d="M1 1h14v14H1zM1 8h14" fill="#ccd6ee" stroke="#93a1c4" strokeWidth="1.500" /></Svg></button>
        <button type="button" aria-label="Maximize" className={VIEW_BTN}><Svg className="h-[9px] w-[9px]"><rect x="1" y="1" width="14" height="14" fill="#fff" stroke="#444" strokeWidth="1.500" /><path d="M1 3h14" stroke="#222" strokeWidth="4" /></Svg></button>
        <button type="button" aria-label="Close view" className={VIEW_BTN}><Svg className="h-[6px] w-[6px]">{closeBox}</Svg></button>
      </div>
      <div className="min-h-0 flex-1 border border-t-2 border-[#3434fa] bg-[#53576d] px-px pb-px">
        <Scene />
      </div>
    </main>
  );
}

/* ---------- color map editor ---------- */

function TransferFunction() {
  return (
    <svg viewBox="0 0 180 110" preserveAspectRatio="none" className="mt-[3px] block h-[110px] w-full shrink-0 bg-white" role="img" aria-label="Opacity transfer function">
      <defs>
        <linearGradient id="pastel">{PASTEL.map(([o, c]) => <stop key={o} offset={`${o}%`} stopColor={c} />)}</linearGradient>
        <linearGradient id="turbo">{TURBO.map((c, i) => <stop key={c} offset={i / (TURBO.length - 1)} stopColor={c} />)}</linearGradient>
      </defs>
      <path d="M4 74L180 5v78H4z" fill="url(#pastel)" />
      <path d="M4 74L180 5" stroke="#55565c" strokeWidth="1.200" />
      <path d="M5 3v80" stroke="#8d949c" strokeWidth="2" />
      <circle cx="4" cy="75" r="2.800" fill="#35203c" stroke="#a3a48f" strokeWidth="1.500" />
      <rect x="4" y="91" width="176" height="13" fill="url(#turbo)" />
      <path d="M4 97.500h176" stroke="#6d705f" strokeWidth="8" strokeLinecap="round" />
      <path d="M4 97.500h176" stroke="#a3a691" strokeWidth="6" strokeLinecap="round" />
      <path d="M8 96.500h172" stroke="#bcbfac" strokeDasharray="2 1" />
    </svg>
  );
}

function ColorMapEditor() {
  return (
    <aside className="flex w-[198px] shrink-0 flex-col pb-[4px] pl-[3px]">
      <PanelHeader title="Color Map Editor" />
      <div className="mt-[4px] mr-[5px] ml-[4px] flex h-[12px] shrink-0 gap-[1px]">
        <input type="search" aria-label="Search color map" placeholder="Search ... (use Esc to clear text)" className={SEARCH} />
        <button type="button" aria-label="Advanced" className={clsx(SMALL_BTN, 'w-[12px]')}><Svg className="h-[8px] w-[8px]">{tool.gear}</Svg></button>
        <button type="button" aria-label="Toggle legend" className={clsx(SMALL_BTN, 'w-[12px] bg-[#dadada]')}><Svg className="h-[8px] w-[8px]">{tool.colorLegend}</Svg></button>
        <button type="button" aria-label="Choose preset" className={clsx(SMALL_BTN, 'w-[12px]')}><Svg className="h-[8px] w-[8px]">{tool.presets}</Svg></button>
      </div>
      <p className="mt-[3px] ml-[4px] h-[11px] shrink-0 leading-[11px]">Array Name: p</p>

      <div className="mr-[5px] ml-[4px] flex min-h-0 flex-1">
        <div className="flex min-w-0 flex-1 flex-col overflow-hidden">
          <div className="flex h-[18px] shrink-0 items-center gap-[2px]">
            <span className="w-[63px] shrink-0 leading-[9px] whitespace-nowrap">Automatic Rescale<br />Range Mode</span>
            <Combo label="Automatic rescale range mode" value="Grow and update on 'Apply'" arrow={false} className="-mr-[4px] h-[13px] flex-1" />
          </div>
          <Check label="Interpret Values As Categories" className="mt-[1px] h-[13px]" />
          <Check label="Rescale On Visibility Change" className="h-[14px]" />
          <h3 className="mt-[2px] shrink-0 border-b border-[#bdbdbd] leading-[9px] font-bold">Mapping Data</h3>
          <Combo label="Preset" value="Select a color map from default presets" arrow={false} className="mt-[3px] -mr-[4px] h-[13px] shrink-0" />
          <TransferFunction />
          <label className="flex h-[13px] shrink-0 items-center gap-[4px]">
            Data:
            <input className="-mr-[4px] h-[12px] min-w-0 flex-1 rounded-xs border border-[#c6c6c6] bg-[#ececec]" />
          </label>
          <div className="mt-[2px] flex h-[57px] shrink-0 flex-col justify-between">
            <Check label="Enable Freehand Drawing Of Opacity Transfer Fun" className="h-[14px]" />
            <Check label="Use Log Scale When Mapping Data To Colors" className="h-[14px]" />
            <Check label="Enable Opacity Mapping For Surfaces" className="h-[14px]" />
            <Check label="Use Log Scale When Mapping Data To Opacity" disabled className="h-[14px]" />
          </div>
          <h3 className="mt-[2px] shrink-0 border-b border-[#bdbdbd] leading-[9px] font-bold">Data Histogram</h3>
          <Check label="Display Data Histogram" className="mt-[2px] h-[14px]" />
          <Check label="Automatically recompute data histogram" disabled className="h-[14px]" />
          <label className="mt-[2px] flex h-[13px] shrink-0 items-center pl-[10px]">
            Number of Bins
            <input defaultValue="10" className="-mr-[4px] ml-auto h-full w-[55px] rounded-xs border border-[#c6c6c6] bg-white" />
          </label>
        </div>
        <VScroll thumb="h-[208px]" />
      </div>
      <div className="mr-[11px] ml-[4px]"><HScroll /></div>
    </aside>
  );
}

/* ---------- VirtualBox status bar ---------- */

const STATUS: [string, ReactNode][] = [
  ['Hard disk', <><rect x="2" y="0" width="12" height="16" fill="#6db8ee" /><circle cx="8" cy="6" r="4" fill="#eaf5fd" stroke="#1d63b5" strokeWidth="2" /><path d="M4 14l5-5" stroke="#1d63b5" strokeWidth="2" /></>],
  ['Optical drive', <><circle cx="8" cy="8" r="7.500" fill="#58bdee" /><circle cx="8" cy="8" r="3" fill="#c7ebfb" /></>],
  ['Audio', <><path d="M1 1h4l5 3v10l-5-2H1z" fill="#57a9dd" /><path d="M11 2h4v12h-4z" fill="#bcd3e0" /></>],
  ['Network', <><rect x="5" y="1" width="10" height="8" fill="#2a66c1" /><rect x="1" y="6" width="10" height="8" fill="#4a8fe0" stroke="#173f83" /></>],
  ['USB', <><path d="M2 14l3-8 6-5 4 4-5 6z" fill="#78c3ee" stroke="#2f7fb4" /></>],
  ['Shared folders', <><path d="M1 3h6l1-2h7v14H1z" fill="#dddddd" stroke="#c2c2c2" /></>],
  ['Display', <><rect x="1" y="1" width="14" height="11" fill="#2e79cf" stroke="#9bd3f5" strokeWidth="2" /><path d="M4 15h8" stroke="#4b6ea0" strokeWidth="2" /></>],
  ['Recording', <><rect x="1" y="4" width="11" height="10" fill="#2a58b4" /><path d="M5 1h10v8H5z" fill="#4c8fe2" /></>],
  ['CPU', <><rect x="1" y="1" width="14" height="14" fill="#73c23a" /><path d="M4 12V5l4 4 4-5v8" stroke="#265f10" strokeWidth="2" /></>],
  ['Mouse integration', <><circle cx="7" cy="8" r="6.500" fill="#5cb8ea" /><path d="M8 1l7 6-4 8-5-5z" fill="#6cc04a" /></>],
  ['Keyboard capture', <><rect x="1" y="0" width="14" height="16" fill="#77c8f2" stroke="#2f7fb4" /><path d="M8 13l-5-5h3V3h4v5h3z" fill="#123b74" /></>],
];

/* ---------- Windows taskbar ---------- */

const APPS: [string, ReactNode, boolean?][] = [
  ['Task view', <><rect x="5" y="1" width="11" height="10" rx="1" fill="#f6f6f6" /><rect x="0" y="5" width="11" height="10" rx="1" fill="#2d2d2d" /><path d="M5 5h6v6H5z" fill="#a6a6a6" /></>],
  ['Chat', <><circle cx="8" cy="8" r="7.500" fill="#6059c4" /><path d="M1 15l1-5 4 4z" fill="#6059c4" /><rect x="3.500" y="5.500" width="6" height="5.500" rx="1" fill="#fff" /><path d="M10 7.500l2.500-1.500v4.500L10 9z" fill="#fff" /></>],
  ['Explorer', <><path d="M0 2h6l1.500 2H16v10H0z" fill="#e8a91d" /><path d="M0 5h16v9H0z" fill="#fcd053" /><path d="M3 10.500h10V14H3z" fill="#1577c7" /></>],
  ['Edge', <><circle cx="8" cy="8" r="7.500" fill="#1a7fd0" /><path d="M1 6C3 0 13-1 15.500 6c.5 4-4 5-6 3.500C10 6 5 4 1 6z" fill="#49cd8b" /><path d="M1 6c4-3 8-1 8 2-3-1-4 3-1 5s5 1 6 0c-3 4-10 3-12.500-1C.5 10 .5 8 1 6z" fill="#0f5fae" /></>],
  ['Store', <><path d="M5 4V1h6v3" stroke="#2f9be0" strokeWidth="1.500" /><rect x=".5" y="3.500" width="15" height="12" rx="1.500" fill="#14457e" /><path d="M5 6.500h2.700v2.700H5z" fill="#f25022" /><path d="M8.300 6.500H11v2.700H8.300z" fill="#7fba00" /><path d="M5 9.800h2.700v2.700H5z" fill="#00a4ef" /><path d="M8.300 9.800H11v2.700H8.300z" fill="#ffb900" /></>],
  ['Firefox', firefox, true],
  ['VirtualBox', <><path d="M2 3l6-3 6 3v8l-6 5-6-5z" fill="#1d3557" /><path d="M2 3l6 3 6-3M8 6v10" stroke="#a8c2df" strokeWidth="1.200" /><path d="M4.500 6l2 5M9.500 11l2-5" stroke="#e1ebf5" strokeWidth="1.300" /></>, true],
  ['Virtual machine', <><rect width="16" height="16" fill="#2b3138" /><path d="M0 14c1-5 6-4 7-7l2-4h7v5c-4 0-4 2-5 5l-2 3H5l1-4c-2 0-4 1-6 2z" fill="#e98d24" /><path d="M9 13l3-5h4v5l-5 3z" fill="#f6cc57" /><path d="M1 1h5v3H1z" fill="#ddd" /></>, true],
];

function Taskbar() {
  return (
    <footer className={clsx('flex h-[30px] shrink-0 items-center border-t border-[#c3c3c3] bg-[#dadada] text-[7px] text-[#333]', SEGOE)}>
      <div className="flex flex-1 items-center pl-[14px]">
        <span className="h-3 w-3 rounded-full bg-gradient-to-b from-[#f5b33b] to-[#ec7d1b]" />
        <div className="ml-[6px] leading-[10px]">
          <div>19°C</div>
          <div className="text-[#666]">Sunny</div>
        </div>
      </div>

      <div className="flex items-center">
        <button type="button" aria-label="Start" className="grid h-[15px] w-[15px] grid-cols-2 gap-[1px]">
          {Array.from({ length: 4 }, (_, i) => <span key={i} className="bg-gradient-to-br from-[#2cacef] to-[#0d77d3]" />)}
        </button>
        <div className="ml-[9px] flex h-[19px] w-[136px] items-center rounded-full border border-[#e8e8e8] bg-[#f5f5f5] pr-[3px] pl-[6px]">
          <Svg className="h-[9px] w-[9px]"><circle cx="7" cy="7" r="5.500" stroke="#222" strokeWidth="1.800" /><path d="M11 11l4.500 4.500" stroke="#222" strokeWidth="1.800" /></Svg>
          <input type="search" aria-label="Search" placeholder="Search" className="ml-[6px] w-[60px] min-w-0 flex-1 bg-transparent text-[8px] placeholder:text-[#555]" />
          <svg viewBox="0 0 30 16" className="h-4 w-[30px]" aria-hidden="true">
            <path d="M2 13c6-3 20-3 26 0-4 3-22 3-26 0z" fill="#dfb98a" />
            <path d="M3 6l9-2 3 8-9 2z" fill="#fafafa" stroke="#60a58e" strokeWidth=".8" />
            <path d="M8 9l7-6" stroke="#e8833a" strokeWidth="1.600" />
            <path d="M1 3l2 2M3 3L1 5" stroke="#c95be0" />
            <rect x="19" y="3" width="8" height="12" rx="3" fill="#1b76d4" />
            <path d="M21 3c0-3 4-3 4 0" stroke="#0f4f9b" fill="none" />
            <rect x="20" y="9" width="6" height="4" rx="1" fill="#0f5bb0" />
          </svg>
        </div>
        <div className="ml-[7px] flex w-[209px] justify-between">
          {APPS.map(([name, icon, running]) => (
            <button key={name} type="button" aria-label={name} className="relative flex h-5 w-4 items-center justify-center">
              <Svg className="h-[15px] w-[15px]">{icon}</Svg>
              {running && <span className="absolute -bottom-[2px] h-[2px] w-1 rounded-full bg-[#888]" />}
            </button>
          ))}
        </div>
      </div>

      <div className="flex flex-1 items-center justify-end pr-[13px]">
        <Svg className="mr-[10px] h-[8px] w-[8px]"><path d="M2 11l6-6 6 6" stroke="#222" strokeWidth="2" /></Svg>
        <Svg className="mr-[10px] h-3 w-3"><path d="M14 5C11 0 4 1 2 6M2 10c1 3 3 4 6 4M14 1v4h-4M2 14v-4h3" stroke="#444" strokeWidth="1.400" /><circle cx="12" cy="12" r="4" fill="#f49a1a" /></Svg>
        <span className="mr-[11px]">ENG</span>
        <Svg className="mr-[5px] h-[10px] w-[10px]"><path d="M1 6c4-4 10-4 14 0M3.500 9c3-2.700 6-2.700 9 0M6 11.500c1.300-1 2.700-1 4 0" stroke="#333" strokeWidth="1.500" /><circle cx="8" cy="14" r="1.300" fill="#333" /></Svg>
        <Svg className="mr-[5px] h-[10px] w-[10px]"><path d="M1 6h2.500L7 3v10l-3.500-3H1zM9 5.500c1.500 1.500 1.500 3.500 0 5M11.500 3.500c2.500 2.500 2.500 6.500 0 9M13.500 2c3 3.500 3 8.500 0 12" stroke="#333" strokeWidth="1.200" /></Svg>
        <Svg className="mr-[10px] h-[11px] w-[11px]"><rect x="2" y="5" width="12" height="8" rx="1.500" fill="#222" /><path d="M14.500 7.500v3" stroke="#222" strokeWidth="2" /><path d="M1 2h5v4H1zM2.500 1v3M4.500 1v3" stroke="#222" /></Svg>
        <div className="text-right leading-[10px]">
          <div>9:37</div>
          <div>8/9/2023</div>
        </div>
        <span className="ml-[4px] flex h-[10px] w-[10px] items-center justify-center rounded-full bg-[#0a78d4] text-[6px] text-white">1</span>
      </div>
    </footer>
  );
}

const VM_ICON = (
  <>
    <rect width="16" height="16" fill="#2b3138" />
    <path d="M1 10l6-4 2-5h6v5l-4 2-2 7H4z" fill="#e98d24" />
    <path d="M9 12l6-5v5z" fill="#f6cc57" />
  </>
);

export default function App() {
  return (
    <div className={clsx('flex h-screen flex-col overflow-hidden bg-[#efefef] text-[7px] leading-none text-[#222]', UBUNTU)}>
      <header className={clsx('shrink-0', SEGOE)}>
        <div className="flex h-[14px] items-center bg-[#f3f3f3] pr-[12px] text-[#777]">
          <Svg className="ml-px h-[10px] w-[10px]">{VM_ICON}</Svg>
          <h1 className="mr-auto ml-[3px] font-medium">Ubuntu-22.04.2 [Running] - Oracle VM VirtualBox</h1>
          <button type="button" aria-label="Minimize window" className="mr-[22px]"><Svg className="h-[7px] w-[7px]"><path d="M1 8h14" stroke="#888" strokeWidth="2" /></Svg></button>
          <button type="button" aria-label="Restore window" className="mr-[23px]"><Svg className="h-[7px] w-[7px]"><rect x="1" y="4" width="11" height="11" rx="2" stroke="#888" strokeWidth="2" /><path d="M5 1h8a2 2 0 0 1 2 2v8" stroke="#888" strokeWidth="2" /></Svg></button>
          <button type="button" aria-label="Close window"><Svg className="h-[7px] w-[7px]"><path d="M1 1l14 14M15 1L1 15" stroke="#888" strokeWidth="2" /></Svg></button>
        </div>
        <nav className="flex h-[12px] items-center gap-[8px] border-b border-[#777] bg-white pl-[4px] text-[6px] text-[#888]">
          {['File', 'Machine', 'View', 'Input', 'Devices', 'Help'].map((m) => <button key={m} type="button">{m}</button>)}
        </nav>
      </header>

      <div className="flex h-[13px] shrink-0 items-center bg-[#131313] font-medium text-[#e8e8e8]">
        <div className="flex flex-1 items-center pl-[9px]">
          <button type="button">Activities</button>
          <Svg className="ml-[18px] h-[7px] w-[7px]"><path d="M4 2L1 14M9 2L6 14M14 2l-3 12" stroke="#888" strokeWidth="2" /></Svg>
          <button type="button" className="ml-[4px]">ParaView</button>
        </div>
        <time className="mr-[-37px]">Aug 9&nbsp; 09:37</time>
        <div className="flex flex-1 items-center justify-end gap-[7px] pr-[7px]">
          <Svg className="h-[8px] w-[8px]"><path d="M5 1h6v5H5zM0 10h5v5H0zM11 10h5v5h-5z" fill="#e8e8e8" /><path d="M8 6v3M3 11V8.500h10V11" stroke="#e8e8e8" /></Svg>
          <Svg className="h-[8px] w-[8px]"><path d="M0 5h4l5-4v14l-5-4H0z" fill="#e8e8e8" /><path d="M11 5c2 2 2 4 0 6M13 2c3.500 4 3.500 8 0 12" stroke="#aaa" strokeWidth="1.500" /></Svg>
          <span className="relative flex h-[8px] w-[8px] justify-center rounded-xs bg-[#bbb]">
            <svg viewBox="0 0 10 11" className="absolute top-[2px] -left-[2px] z-10 h-[11px] w-[10px]" aria-hidden="true">
              <path d="M0 0h10v8H5l-2 3V8H0z" fill="#6cc8f4" />
              <path d="M5 1.500v3.500M5 6v1" stroke="#123" strokeWidth="1.300" />
            </svg>
          </span>
        </div>
      </div>

      <div className="flex min-h-0 flex-1">
        <Dock />
        <div className="flex min-w-0 flex-1 flex-col font-medium">
          <div className="flex h-[19px] shrink-0 items-center border-b border-[#d6d6d6] bg-[#e9e9e9] pr-[4px]">
            <h2 className="ml-[49px] flex-1 text-center font-bold">ParaView 5.10.1</h2>
            <div className="flex gap-[6px]">
              {[['Minimize', 'M3 12h10'], ['Restore', 'M2 6h8v8H2zM6 6V2h8v8h-4'], ['Close', 'M3 3l10 10M13 3L3 13']].map(([n, d]) => (
                <button key={n} type="button" aria-label={n} className="flex h-[11px] w-[11px] items-center justify-center rounded-full bg-[#d5d5d5]">
                  <Svg className="h-[5px] w-[5px]"><path d={d} stroke="#333" strokeWidth="2.500" /></Svg>
                </button>
              ))}
            </div>
          </div>
          <nav className="flex h-[11px] shrink-0 items-center gap-[8px] pl-[5px]">
            {MENUS.map(([a, u, b]) => <button key={a + u + b} type="button"><span>{a}<u>{u}</u>{b}</span></button>)}
          </nav>
          <Toolbars />
          <div className="flex min-h-0 flex-1">
            <LeftColumn />
            <RenderView />
            <ColorMapEditor />
          </div>
          <div className="flex h-[12px] shrink-0 items-center border-t border-[#d0d0d0]">
            <button type="button" aria-label="Abort" className={clsx(SMALL_BTN, 'ml-[462px] h-[9px] w-[9px]')}>
              <Svg className="h-[4px] w-[4px]"><path d="M2 2l12 12M14 2L2 14" stroke="#777" strokeWidth="5" /></Svg>
            </button>
            <span className="ml-[3px] h-[9px] flex-1 border-b border-l border-[#cfcfcf]" />
          </div>
        </div>
      </div>

      <div className={clsx('flex h-[13px] shrink-0 items-center justify-end bg-[#f0f0f0] text-[6px]', SEGOE)}>
        <div className="flex w-[126px] justify-between">
          {STATUS.map(([name, icon]) => <button key={name} type="button" aria-label={name}><Svg className="h-[10px] w-[10px]">{icon}</Svg></button>)}
        </div>
        <span className="ml-[2px] w-[27px] whitespace-nowrap">Right Ctrl</span>
      </div>
      <Taskbar />
    </div>
  );
}
